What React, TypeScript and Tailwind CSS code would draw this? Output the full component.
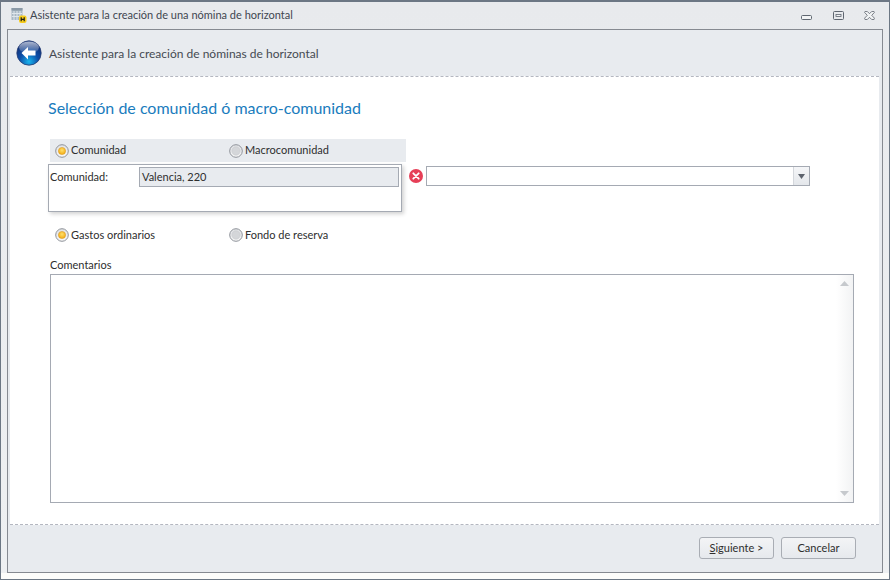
import type { ReactNode } from "react";

function Radio({ checked = false, label, width }: { checked?: boolean; label: string; width: string }) {
  return (
    <label className={`flex items-center gap-[2px] ${width}`}>
      <svg width="14" height="14" viewBox="0 0 14 14" className="shrink-0">
        <defs>
          <radialGradient id="radioOn" cx="50%" cy="40%" r="60%">
            <stop offset="0%" stopColor="#ffe06a" />
            <stop offset="100%" stopColor="#f2aa12" />
          </radialGradient>
          <linearGradient id="radioFace" x1="0" y1="0" x2="0" y2="1">
            <stop offset="0%" stopColor="#dfe1e4" />
            <stop offset="100%" stopColor="#f8f8f8" />
          </linearGradient>
        </defs>
        <circle cx="7" cy="7" r="6.3" fill="url(#radioFace)" stroke="#8f939a" strokeWidth="1" />
        {checked ? <circle cx="7" cy="7" r="3.6" fill="url(#radioOn)" stroke="#d8941a" strokeWidth="0.5" /> : <circle cx="7" cy="7" r="4.2" fill="#d4d6d9" stroke="#c4c6ca" strokeWidth="0.5" />}
      </svg>
      <span>{label}</span>
    </label>
  );
}

function WizardButton({ children }: { children: ReactNode }) {
  return (
    <button
      type="button"
      className="flex h-[22px] w-[75px] items-center justify-center rounded-[3px] border border-[#a9adb4] bg-gradient-to-b from-[#f3f4f6] to-[#e6e9ed] text-[11px] text-[#2e2e2e]"
    >
      {children}
    </button>
  );
}

function AppIcon() {
  return (
    <svg width="16" height="17" viewBox="0 0 16 17" className="shrink-0">
      <rect x="0.5" y="1" width="11" height="12" fill="#a9b8c4" />
      <rect x="0.5" y="1" width="11" height="2.5" fill="#8a99a6" />
      <path d="M3 4v9M6 4v9M9 4v9M1 6.5h10M1 9.5h10" stroke="#dfe6eb" strokeWidth="1" />
      <rect x="8" y="8.5" width="7.5" height="7.5" rx="2" fill="#f7cc1a" />
      <path d="M10.2 10.3v4M13.2 10.3v4M10.2 12.3h3" stroke="#1b1b1b" strokeWidth="1.2" fill="none" />
    </svg>
  );
}

function BackIcon() {
  return (
    <svg width="26" height="26" viewBox="0 0 26 26" className="shrink-0">
      <defs>
        <radialGradient id="backBody" cx="50%" cy="85%" r="70%">
          <stop offset="0%" stopColor="#19b5ee" />
          <stop offset="55%" stopColor="#0d4fa8" />
          <stop offset="100%" stopColor="#10337c" />
        </radialGradient>
        <linearGradient id="backShine" x1="0" y1="0" x2="0" y2="1">
          <stop offset="0%" stopColor="#ffffff" stopOpacity="0.65" />
          <stop offset="100%" stopColor="#ffffff" stopOpacity="0.08" />
        </linearGradient>
      </defs>
      <circle cx="13" cy="13" r="12.2" fill="url(#backBody)" stroke="#2a3f73" strokeWidth="0.8" />
      <ellipse cx="13" cy="7.5" rx="10" ry="6" fill="url(#backShine)" />
      <path d="M5.500 13 12 7v3.600h7.500v5H12V19.500z" fill="#ffffff" />
    </svg>
  );
}

function WindowControls() {
  return (
    <div className="flex items-center">
      <svg width="11" height="6" viewBox="0 0 11 6" className="mt-[5px]">
        <rect x="0.5" y="0.5" width="10" height="4" rx="1" fill="#f2f4f5" stroke="#5f6670" />
      </svg>
      <svg width="11" height="9" viewBox="0 0 11 9" className="ml-[21px] -mt-[1px]">
        <rect x="0.5" y="0.5" width="10" height="8" rx="1" fill="none" stroke="#5f6670" />
        <rect x="3" y="3.500" width="5" height="2" fill="#f2f4f5" stroke="#5f6670" strokeWidth="0.8" />
      </svg>
      <svg width="11" height="9" viewBox="0 0 12 10" className="ml-[20px] -mt-[1px]">
        <path
          d="M1 .5h2.500L6 3 8.500.5H11l.5 1L8.500 4.800 11.500 8l-.5 1.500H8.500L6 7 3.500 9.500H1L.5 8l3-3.200-3-3.300z"
          fill="#f2f4f5"
          stroke="#5f6670"
          strokeWidth="0.9"
        />
      </svg>
    </div>
  );
}

export default function App() {
  return (
    <div className="flex h-[580px] w-[890px] flex-col overflow-hidden border-x border-b border-t-2 border-[#6c7784] bg-gradient-to-b from-[#e8eaed] to-[#eef0f2] font-['Lato','Open_Sans',sans-serif] text-[11px] text-[#2e2e2e]">
      <div className="flex h-[27px] shrink-0 items-center pl-[10px] pr-[14px]">
        <AppIcon />
        <span className="ml-[3px] flex-1 text-[#3f4650]">Asistente para la creación de una nómina de horizontal</span>
        <WindowControls />
      </div>

      <div className="ml-[6px] mr-[6px] flex min-h-0 w-[876px] flex-1 flex-col border border-[#868a91] bg-[#e8ebef]">
        <div className="flex h-[46px] shrink-0 items-center pl-[8px] text-[12px] text-[#454a52]">
          <BackIcon />
          <span className="ml-[7px] mt-[1px]">Asistente para la creación de nóminas de horizontal</span>
        </div>

        <div className="mx-[2px] mr-[3px] flex min-h-0 flex-1 flex-col border-y border-dashed border-[#b4b7c0] bg-white pl-[38px]">
          <h1 className="mt-[19px] mb-[1px] h-[24px] text-[16px] leading-[24px] text-[#1a7cbd]">Selección de comunidad ó macro-comunidad</h1>

          <div className="mt-[18px] flex items-start">
            <div className="flex w-[358px] flex-col">
              <div className="ml-[2px] flex h-[23px] w-[356px] items-center bg-[#e8ebef] pl-[5px]">
                <Radio checked label="Comunidad" width="w-[174px]" />
                <Radio label="Macrocomunidad" width="flex-1" />
              </div>
              <div className="mt-[2px] h-[48px] w-[354px] border border-[#a5aab3] pl-[1px] pt-[2px] shadow-[2px_2px_4px_rgba(0,0,0,0.18)]">
                <div className="flex items-center">
                  <span className="w-[89px]">Comunidad:</span>
                  <div className="flex h-[20px] w-[260px] items-center border border-[#a5aab3] bg-[#e8ebef] pl-[2px]">Valencia, 220</div>
                </div>
              </div>
            </div>

            <svg width="14" height="14" viewBox="0 0 14 14" className="ml-[3px] mt-[30px] shrink-0">
              <circle cx="7" cy="7" r="7" fill="#e63f57" />
              <path d="M4.300 4.300 9.700 9.700M9.700 4.300 4.300 9.700" stroke="#ffffff" strokeWidth="1.800" strokeLinecap="round" />
            </svg>

            <div className="ml-[3px] mt-[27px] flex h-[20px] w-[384px] border border-[#a5aab3] bg-white">
              <div className="flex-1" />
              <div className="flex w-[16px] items-center justify-center border-l border-[#d4d7dc] bg-gradient-to-b from-[#f5f6f8] to-[#e4e7eb]">
                <svg width="7" height="5" viewBox="0 0 7 5">
                  <path d="M0 0h7L3.500 5z" fill="#5d636d" />
                </svg>
              </div>
            </div>
          </div>

          <div className="ml-[7px] mt-[14px] flex h-[18px] items-center">
            <Radio checked label="Gastos ordinarios" width="w-[174px]" />
            <Radio label="Fondo de reserva" width="w-[180px]" />
          </div>

          <div className="ml-[2px] mt-[13px] h-[16px] leading-[16px]">Comentarios</div>

          <div className="ml-[2px] mt-[1px] flex h-[229px] w-[804px] border border-[#a5aab3] bg-white">
            <div className="flex-1" />
            <div className="flex w-[17px] flex-col items-center justify-between bg-gradient-to-r from-white to-[#f2f3f4] py-[6px]">
              <svg width="9" height="5" viewBox="0 0 9 5">
                <path d="M4.500 0 9 5H0z" fill="#c6c9cd" />
              </svg>
              <svg width="9" height="5" viewBox="0 0 9 5">
                <path d="M0 0h9L4.500 5z" fill="#c6c9cd" />
              </svg>
            </div>
          </div>
        </div>

        <div className="flex h-[47px] shrink-0 items-start justify-end gap-[7px] pr-[26px] pt-[12px]">
          <WizardButton>
            <span>
              <span className="underline">S</span>iguiente &gt;
            </span>
          </WizardButton>
          <WizardButton>Cancelar</WizardButton>
        </div>
      </div>
      <div className="h-[6px] shrink-0 bg-[#fdfdfb]" />
    </div>
  );
}
